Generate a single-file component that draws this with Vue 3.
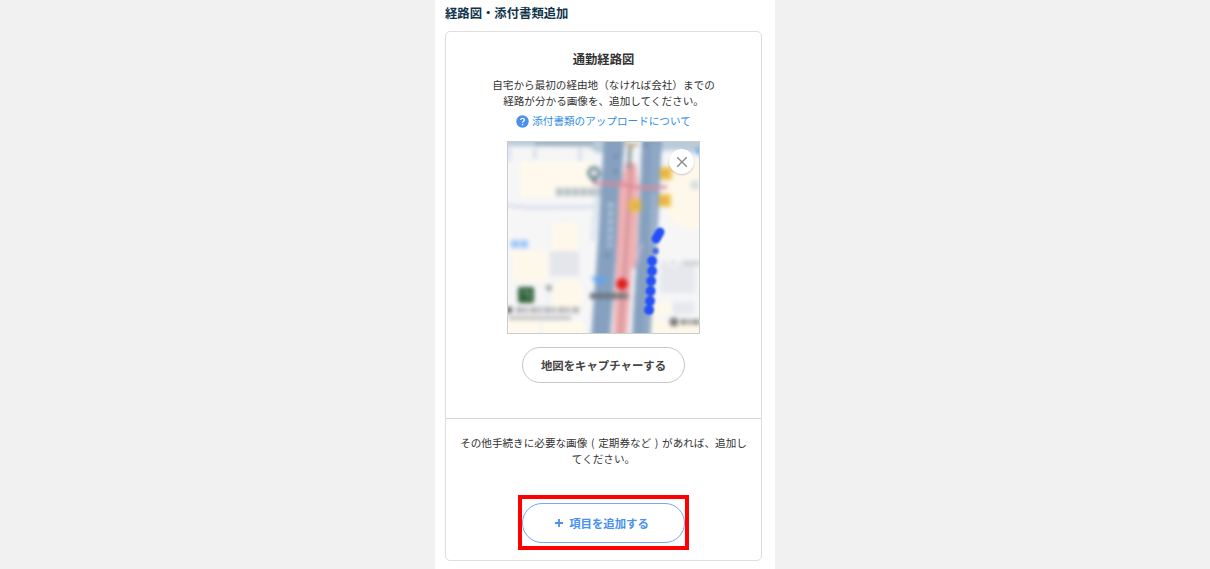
<template>
    <div class="page">
        <div class="panel">
            <h2 class="title">経路図・添付書類追加</h2>
            <div class="card">
                <section class="route">
                    <h3 class="card-title">通勤経路図</h3>
                    <p class="text">自宅から最初の経由地（なければ会社）までの<br>経路が分かる画像を、追加してください。</p>
                    <a class="help">
                        <svg width="13" height="13" viewBox="0 0 13 13">
                            <circle cx="6.5" cy="6.5" r="6.2" fill="#4a90ee" />
                            <path d="M4.7 5.1C4.7 2.8 8.4 2.9 8.4 5C8.4 6.3 6.5 6.2 6.5 7.7" fill="none" stroke="#fff" stroke-width="1.2" />
                            <circle cx="6.5" cy="9.6" r=".8" fill="#fff" />
                        </svg>
                        <span>添付書類のアップロードについて</span>
                    </a>
                    <div class="map">
                        <svg class="map-image" width="191" height="191" viewBox="1 1 191 191">
                            <rect width="193" height="193" fill="#f6f6f7" />
                            <g class="soft">
                                <!-- 水辺と建物 -->
                                <path d="M-4 -4H198V14L170 9L90 12L82 6L-4 5Z" fill="#b9cbd9" />
                                <path d="M28 2H86" stroke="#8296a6" stroke-width="3" stroke-dasharray="4 1" />
                                <path d="M2 7V20M28 7V18M73 7V20" stroke="#d2d8ea" stroke-width="3" />
                                <path d="M13 20H86V56H13Z" fill="#fef9ec" />
                                <path d="M166 20H198V88H184C168 86 160 78 158 62Z" fill="#fef8ea" />
                                <rect x="45" y="82" width="26" height="28" fill="#fef8ea" />
                                <rect x="5" y="110" width="36" height="31" fill="#fef8ea" />
                                <rect x="43" y="110" width="29" height="25" fill="#e4e6ec" />
                                <circle cx="60" cy="154" r="17" fill="#fef8ea" />
                                <path d="M-2 174H32V198H-2ZM36 180H77V198H36Z" fill="#fef9ec" />
                                <path d="M153 120H188V152H153Z" fill="#e6e8ed" />
                                <path d="M166 161H187V173H166Z" fill="#e6e8ee" />
                                <path d="M146 162H164V174H150V180H198V198H144Z" fill="#fef8ea" />
                                <path d="M-2 64L24 67L88 66" fill="none" stroke="#ccd5e7" stroke-width="2.5" />
                                <path d="M34 168L42 160V148" fill="none" stroke="#edf0f8" stroke-width="3" />
                                <!-- 道路 -->
                                <path d="M88 50L97 24L88 100L84 100Z" fill="#dce5ee" />
                                <path d="M97 -4H118L104 198H84L91 100Z" fill="#86a1c0" />
                                <path d="M135 -4H155L151 80L143 198H124L131 100Z" fill="#86a1c0" />
                                <path d="M148 2L146 90L139 192" fill="none" stroke="#99afcb" stroke-width="3" />
                                <path d="M118 -4H135L125 198H103Z" fill="#f1f3f5" />
                                <path d="M119 22H129L132 48L129 126L125 127L120 198H106L112 48Z" fill="#efb0b3" />
                                <path d="M124 25L119 110L113 198" fill="none" stroke="#d08f94" stroke-width="3" />
                                <path d="M123 5L122 27" stroke="#78848c" stroke-width="3" />
                                <path d="M86 42L113 43L135 47L160 46" fill="none" stroke="#df8895" stroke-width="3" />
                                <path d="M104 62L103 106" stroke="#b2c3d9" stroke-width="5" stroke-dasharray="5 3" />
                                <path d="M147 55L145 103" stroke="#abbed3" stroke-width="4" stroke-dasharray="4 3" />
                                <path d="M109 14V35M101 113L95 119M138 3V18" stroke="#60799a" stroke-width="3" stroke-dasharray="3 12" />
                                <path d="M135 103L128 128" stroke="#bdb1cc" stroke-width="3" />
                                <!-- 地名 -->
                                <path d="M49 51H94" stroke="#b8c3c8" stroke-width="8" stroke-dasharray="7 1" />
                                <path d="M4 103H22" stroke="#a2c8f8" stroke-width="8" stroke-dasharray="8 1" />
                                <path d="M83 155H121" stroke="#6d7176" stroke-width="6" stroke-dasharray="6 1" />
                                <path d="M-1 169H5" stroke="#5e6063" stroke-width="6" />
                                <path d="M9 169H72" stroke="#b4b5b8" stroke-width="6" stroke-dasharray="7 1 4 2" />
                                <path d="M2 177H64" stroke="#b6b7ba" stroke-width="4" stroke-dasharray="4 1" />
                                <path d="M174 181H198" stroke="#777" stroke-width="5" stroke-dasharray="5 2 3 2" />
                                <path d="M177 122H198" stroke="#c6c7ca" stroke-width="4" stroke-dasharray="4 1" />
                                <circle cx="167" cy="181" r="4.5" fill="#777a7d" />
                                <circle cx="166" cy="121" r="4" fill="#fff" />
                                <circle cx="166" cy="121" r="1.6" fill="#999" />
                                <circle cx="42" cy="147" r="3" fill="#a0a1a3" />
                                <circle cx="188" cy="44" r="5" fill="#dadee2" />
                                <circle cx="193" cy="10" r="4" fill="#6daaf4" />
                                <path d="M119 2L126 5L131 2" fill="none" stroke="#c3a982" stroke-width="3" />
                                <!-- 目印 -->
                                <circle cx="87" cy="32" r="5" fill="none" stroke="#78949d" stroke-width="4" />
                                <path d="M83 36H91L87 43Z" fill="#648089" />
                                <rect x="11" y="146" width="16" height="16" rx="2" fill="#34633e" />
                                <path d="M15 151H22V158" fill="none" stroke="#729679" stroke-width="2" />
                                <rect x="153" y="26" width="12" height="13" rx="2" fill="#efc04d" />
                                <rect x="152" y="53" width="12" height="13" rx="2" fill="#efc04d" />
                                <rect x="122" y="58" width="12" height="13" rx="2" fill="#e8bd4c" />
                                <path d="M158 30V35M157 57V62M128 62V67" stroke="#dba63c" stroke-width="3" />
                                <path d="M86 137H100L95 142H90Z" fill="#65a4eb" stroke="#65a4eb" stroke-width="2" />
                                <circle cx="115" cy="143" r="5.8" fill="#df1c1c" />
                            </g>
                            <g class="trail" fill="#254ff8">
                                <path d="M153 91L149 98" stroke="#254ff8" stroke-width="9" stroke-linecap="round" />
                                <circle cx="148.5" cy="110" r="3.2" fill="#4a6cdc" />
                                <circle v-for="(dot, i) in trail" :key="i" :cx="dot.x" :cy="dot.y" r="4.9" />
                            </g>
                        </svg>
                        <button class="close" aria-label="閉じる">
                            <svg width="12" height="12" viewBox="0 0 12 12">
                                <path d="M1.2 1.2L10.8 10.8M10.8 1.2L1.2 10.8" stroke="#8a8a8a" stroke-width="1.4" />
                            </svg>
                        </button>
                    </div>
                    <button class="capture">地図をキャプチャーする</button>
                </section>
                <section class="other">
                    <p class="text note">その他手続きに必要な画像 ( 定期券など ) があれば、追加し<br>てください。</p>
                    <div class="highlight">
                        <button class="add">
                            <svg width="8" height="8" viewBox="0 0 8 8">
                                <path d="M4 0V8M0 4H8" stroke="#4a90ee" stroke-width="1.8" />
                            </svg>
                            <span>項目を追加する</span>
                        </button>
                    </div>
                </section>
            </div>
        </div>
    </div>
</template>

<script setup>
import { ref } from 'vue';

// 経路の点
const trail = ref([
    { x: 145, y: 120 },
    { x: 145, y: 130 },
    { x: 144, y: 140 },
    { x: 143.5, y: 150 },
    { x: 143, y: 160 },
    { x: 142, y: 169 },
]);
</script>

<style>
body {
    margin: 0;
    background: #f1f1f1;
}
</style>

<style scoped>
.page {
    display: flex;
    height: 569px;
    overflow: hidden;
    padding-left: 435px;
    box-sizing: border-box;
    font-family: "Noto Sans CJK JP", sans-serif;
    color: #333;
}

.panel {
    width: 340px;
    padding: 4px 13px 0 10px;
    box-sizing: border-box;
    background: #fff;
}

.title {
    margin: 0 0 9px;
    font-size: 12.35px;
    line-height: 18px;
    color: #10344c;
}

.card {
    height: 530px;
    box-sizing: border-box;
    border: 1px solid #dedede;
    border-radius: 5px;
}

.route,
.other {
    display: flex;
    flex-direction: column;
    align-items: center;
}

.route {
    height: 386px;
    border-bottom: 1px solid #d5d5d5;
}

.card-title {
    margin: 18px 0 9px;
    font-size: 12.3px;
    line-height: 18px;
}

.text {
    margin: 0;
    font-size: 10.6px;
    line-height: 16px;
    text-align: center;
    white-space: nowrap;
}

.note {
    word-spacing: 1.3px;
}

.help {
    display: flex;
    align-items: center;
    gap: 3px;
    margin-top: 4px;
    font-size: 10.6px;
    line-height: 16px;
    color: #2f8de4;
}

.map {
    position: relative;
    width: 191px;
    height: 191px;
    margin-top: 12px;
    border: 1px solid #c9cdd0;
}

.map-image {
    display: block;
    overflow: hidden;
}

.soft {
    filter: blur(1.9px);
}

.trail {
    filter: blur(1.3px);
}

button {
    display: flex;
    align-items: center;
    justify-content: center;
    padding: 0;
    box-sizing: border-box;
    background: #fff;
    font-family: inherit;
    font-weight: 600;
}

.close {
    position: absolute;
    top: 7px;
    right: 5px;
    width: 25px;
    height: 25px;
    border: none;
    border-radius: 50%;
    box-shadow: 0 1px 2px rgba(0, 0, 0, .2);
}

.capture {
    width: 163px;
    height: 36px;
    margin-top: 13px;
    border: 1px solid #c6c6c6;
    border-radius: 18px;
    font-size: 11.4px;
    color: #444;
}

.other {
    padding-top: 16px;
}

.highlight {
    margin-top: 28px;
    padding: 4px 0 3px;
    border: 4px solid #f00;
}

.add {
    gap: 6px;
    width: 163px;
    height: 40px;
    padding-right: 3px;
    border: 1px solid #72a9f4;
    border-radius: 20px;
    font-size: 11.4px;
    color: #4a90ee;
}
</style>
